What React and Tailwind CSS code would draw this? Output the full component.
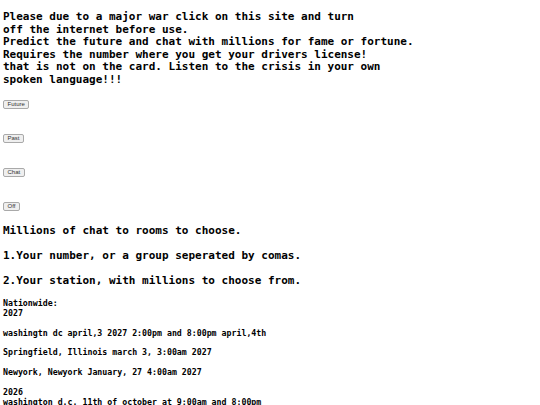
import React from 'react';

const intro = [
  'Please due to a major war click on this site and turn',
  'off the internet before use.',
  'Predict the future and chat with millions for fame or fortune.',
  'Requires the number where you get your drivers license!',
  'that is not on the card. Listen to the crisis in your own',
  'spoken language!!!',
];

const buttons = ['Future', 'Past', 'Chat', 'Off'];

const steps = [
  'Millions of chat to rooms to choose.',
  '1.Your number, or a group seperated by comas.',
  '2.Your station, with millions to choose from.',
];

const schedule = `Nationwide:
2027

washingtn dc april,3 2027 2:00pm and 8:00pm april,4th

Springfield, Illinois march 3, 3:00am 2027

Newyork, Newyork January, 27 4:00am 2027

2026
washington d.c. 11th of october at 9:00am and 8:00pm`;

const App = () => {
  return (
    <div className="bg-white text-black pl-[3px] font-bold font-['DejaVu_Sans_Mono',monospace]">
      <div className="pt-[11px] text-[11px] leading-[12.6px]">
        {intro.map((line) => (
          <div key={line} className="whitespace-pre">{line}</div>
        ))}
      </div>

      <div className="flex flex-col items-start gap-[25px] mt-[13px]">
        {buttons.map((b) => (
          <button
            key={b}
            className="h-[9px] px-[3.5px] text-[6px] leading-none font-normal font-['Liberation_Sans',sans-serif] text-[#333] bg-[#efefef] border border-[#a9a9a9] rounded-[2px]"
          >
            {b}
          </button>
        ))}
      </div>

      <div className="flex flex-col gap-[12.8px] mt-[14px] text-[11px] leading-[12.6px]">
        {steps.map((s) => (
          <div key={s}>{s}</div>
        ))}
      </div>

      <pre className="mt-[11px] text-[8.25px] leading-[9.9px] font-bold font-['DejaVu_Sans_Mono',monospace]">
        {schedule}
      </pre>
    </div>
  );
};

export default App;
